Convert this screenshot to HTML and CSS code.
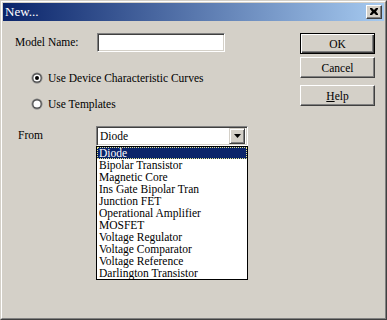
FILE: index.html
```html
<!DOCTYPE html>
<html>
<head>
<meta charset="utf-8">
<link rel="stylesheet" href="styles.css">
</head>
<body>
<div class="window">
  <div class="frame">
    <div class="titlebar">
      <span class="title">New...</span>
      <span class="close">
        <svg width="8" height="7" viewBox="0 0 8 7"><path d="M0 0h2l2 2 2-2h2v1L6 3.5 8 6v1H6L4 5 2 7H0V6l2-2.5L0 1z" fill="#000"/></svg>
      </span>
    </div>
    <div class="client">
      <div class="form">
        <div class="name-row">
          <span class="name-label">Model Name:</span>
          <div class="edit"></div>
        </div>
        <div class="radio-row first">
          <svg class="radio" width="12" height="12" viewBox="0 0 12 12">
            <circle cx="6" cy="6" r="5.5" fill="#808080"/>
            <path d="M1.6 9.8A5.5 5.5 0 0 0 10 2.1 5.5 5.5 0 0 1 1.6 9.8z" fill="#fff"/>
            <circle cx="6" cy="6" r="4.5" fill="#404040"/>
            <circle cx="6" cy="6" r="3.6" fill="#fff"/>
            <circle cx="6" cy="6" r="2" fill="#000"/>
          </svg>
          <span class="radio-text">Use Device Characteristic Curves</span>
        </div>
        <div class="radio-row second">
          <svg class="radio" width="12" height="12" viewBox="0 0 12 12">
            <circle cx="6" cy="6" r="5.5" fill="#808080"/>
            <path d="M1.6 9.8A5.5 5.5 0 0 0 10 2.1 5.5 5.5 0 0 1 1.6 9.8z" fill="#fff"/>
            <circle cx="6" cy="6" r="4.5" fill="#404040"/>
            <circle cx="6" cy="6" r="3.6" fill="#fff"/>
          </svg>
          <span class="radio-text">Use Templates</span>
        </div>
        <div class="from-row">
          <span class="from-label">From</span>
          <div class="combo">
            <div class="combo-field">
              <span class="combo-value">Diode</span>
              <span class="combo-btn">
                <svg width="7" height="4" viewBox="0 0 7 4"><path d="M0 0h7L3.5 4z" fill="#000"/></svg>
              </span>
            </div>
            <ul class="list">
              <li class="item selected">Diode</li>
              <li class="item">Bipolar Transistor</li>
              <li class="item">Magnetic Core</li>
              <li class="item">Ins Gate Bipolar Tran</li>
              <li class="item">Junction FET</li>
              <li class="item">Operational Amplifier</li>
              <li class="item">MOSFET</li>
              <li class="item">Voltage Regulator</li>
              <li class="item">Voltage Comparator</li>
              <li class="item">Voltage Reference</li>
              <li class="item">Darlington Transistor</li>
            </ul>
          </div>
        </div>
      </div>
      <div class="buttons">
        <div class="btn default"><span class="btn-inner">OK</span></div>
        <div class="btn cancel"><span class="btn-inner">Cancel</span></div>
        <div class="btn help"><span class="btn-inner"><u>H</u>elp</span></div>
      </div>
    </div>
  </div>
</div>
</body>
</html>
```
FILE: styles.css
```css
* { box-sizing: border-box; }
html, body { margin: 0; padding: 0; }
body {
  width: 387px;
  height: 320px;
  overflow: hidden;
  background: #d4d0c8;
  font-family: "Liberation Serif", "Times New Roman", serif;
  font-size: 11.5px;
  color: #000;
}
.window {
  width: 387px;
  height: 320px;
  border: 1px solid;
  border-color: #d4d0c8 #404040 #404040 #d4d0c8;
  background: #d4d0c8;
}
.frame {
  height: 100%;
  border: 1px solid;
  border-color: #fff #808080 #808080 #fff;
  padding: 1px;
  display: flex;
  flex-direction: column;
}
.titlebar {
  height: 18px;
  flex: none;
  background: linear-gradient(to right, #0a246a, #a6caf0);
  display: flex;
  align-items: center;
  justify-content: space-between;
  padding: 0 2px 0 2px;
}
.title {
  color: #fff;
  font-size: 13px;
  font-weight: normal;
  line-height: 18px;
}
.close {
  width: 16px;
  height: 14px;
  background: #d4d0c8;
  border: 1px solid;
  border-color: #fff #404040 #404040 #fff;
  box-shadow: inset -1px -1px 0 #808080;
  display: flex;
  align-items: center;
  justify-content: center;
  padding-bottom: 1px;
}
.client {
  flex: 1;
  display: flex;
  padding: 12px 9px 0 12px;
}
.form {
  flex: 1;
  display: flex;
  flex-direction: column;
}
.name-row {
  display: flex;
  align-items: center;
  height: 19px;
}
.name-label {
  width: 82px;
  line-height: 19px;
}
.edit {
  width: 128px;
  height: 19px;
  background: #fff;
  border: 1px solid;
  border-color: #808080 #fff #fff #808080;
  box-shadow: inset 1px 1px 0 #404040, inset -1px -1px 0 #d4d0c8;
}
.radio-row {
  display: flex;
  align-items: center;
  height: 14px;
  padding-left: 16px;
}
.radio-row.first { margin-top: 19px; }
.radio-row.second { margin-top: 12px; }
.radio { flex: none; }
.radio-text {
  margin-left: 5px;
  line-height: 14px;
}
.from-row {
  display: flex;
  align-items: flex-start;
  margin-top: 15px;
  padding-left: 3px;
}
.from-label {
  width: 78px;
  line-height: 18px;
}
.combo {
  position: relative;
  width: 152px;
}
.combo-field {
  height: 20px;
  background: #fff;
  border: 1px solid;
  border-color: #808080 #fff #fff #808080;
  box-shadow: inset 1px 1px 0 #404040, inset -1px -1px 0 #d4d0c8;
  display: flex;
  align-items: center;
  padding: 2px 2px 2px 3px;
}
.combo-value {
  flex: 1;
  line-height: 14px;
}
.combo-btn {
  width: 16px;
  height: 16px;
  background: #d4d0c8;
  border: 1px solid;
  border-color: #d4d0c8 #404040 #404040 #d4d0c8;
  box-shadow: inset 1px 1px 0 #fff, inset -1px -1px 0 #808080;
  display: flex;
  align-items: center;
  justify-content: center;
}
.list {
  position: absolute;
  left: 0;
  top: 20px;
  width: 152px;
  margin: 0;
  padding: 0;
  list-style: none;
  background: #fff;
  border: 1px solid #000;
  z-index: 2;
}
.item {
  height: 12px;
  line-height: 12px;
  padding-left: 2px;
  white-space: nowrap;
}
.item.selected {
  background: #0a246a;
  color: #fff;
  outline: 1px dotted #e8e890;
  outline-offset: -1px;
}
.buttons {
  width: 75px;
  display: flex;
  flex-direction: column;
}
.btn {
  height: 21px;
  background: #d4d0c8;
  border: 1px solid;
  border-color: #fff #404040 #404040 #fff;
  box-shadow: inset -1px -1px 0 #808080;
  display: flex;
  align-items: center;
  justify-content: center;
}
.btn.default {
  border: 1px solid #000;
  box-shadow: inset 1px 1px 0 #fff, inset -1px -1px 0 #404040, inset -2px -2px 0 #808080;
}
.btn.cancel { margin-top: 3px; }
.btn.help { margin-top: 7px; }
.btn-inner {
  line-height: 14px;
}
```
